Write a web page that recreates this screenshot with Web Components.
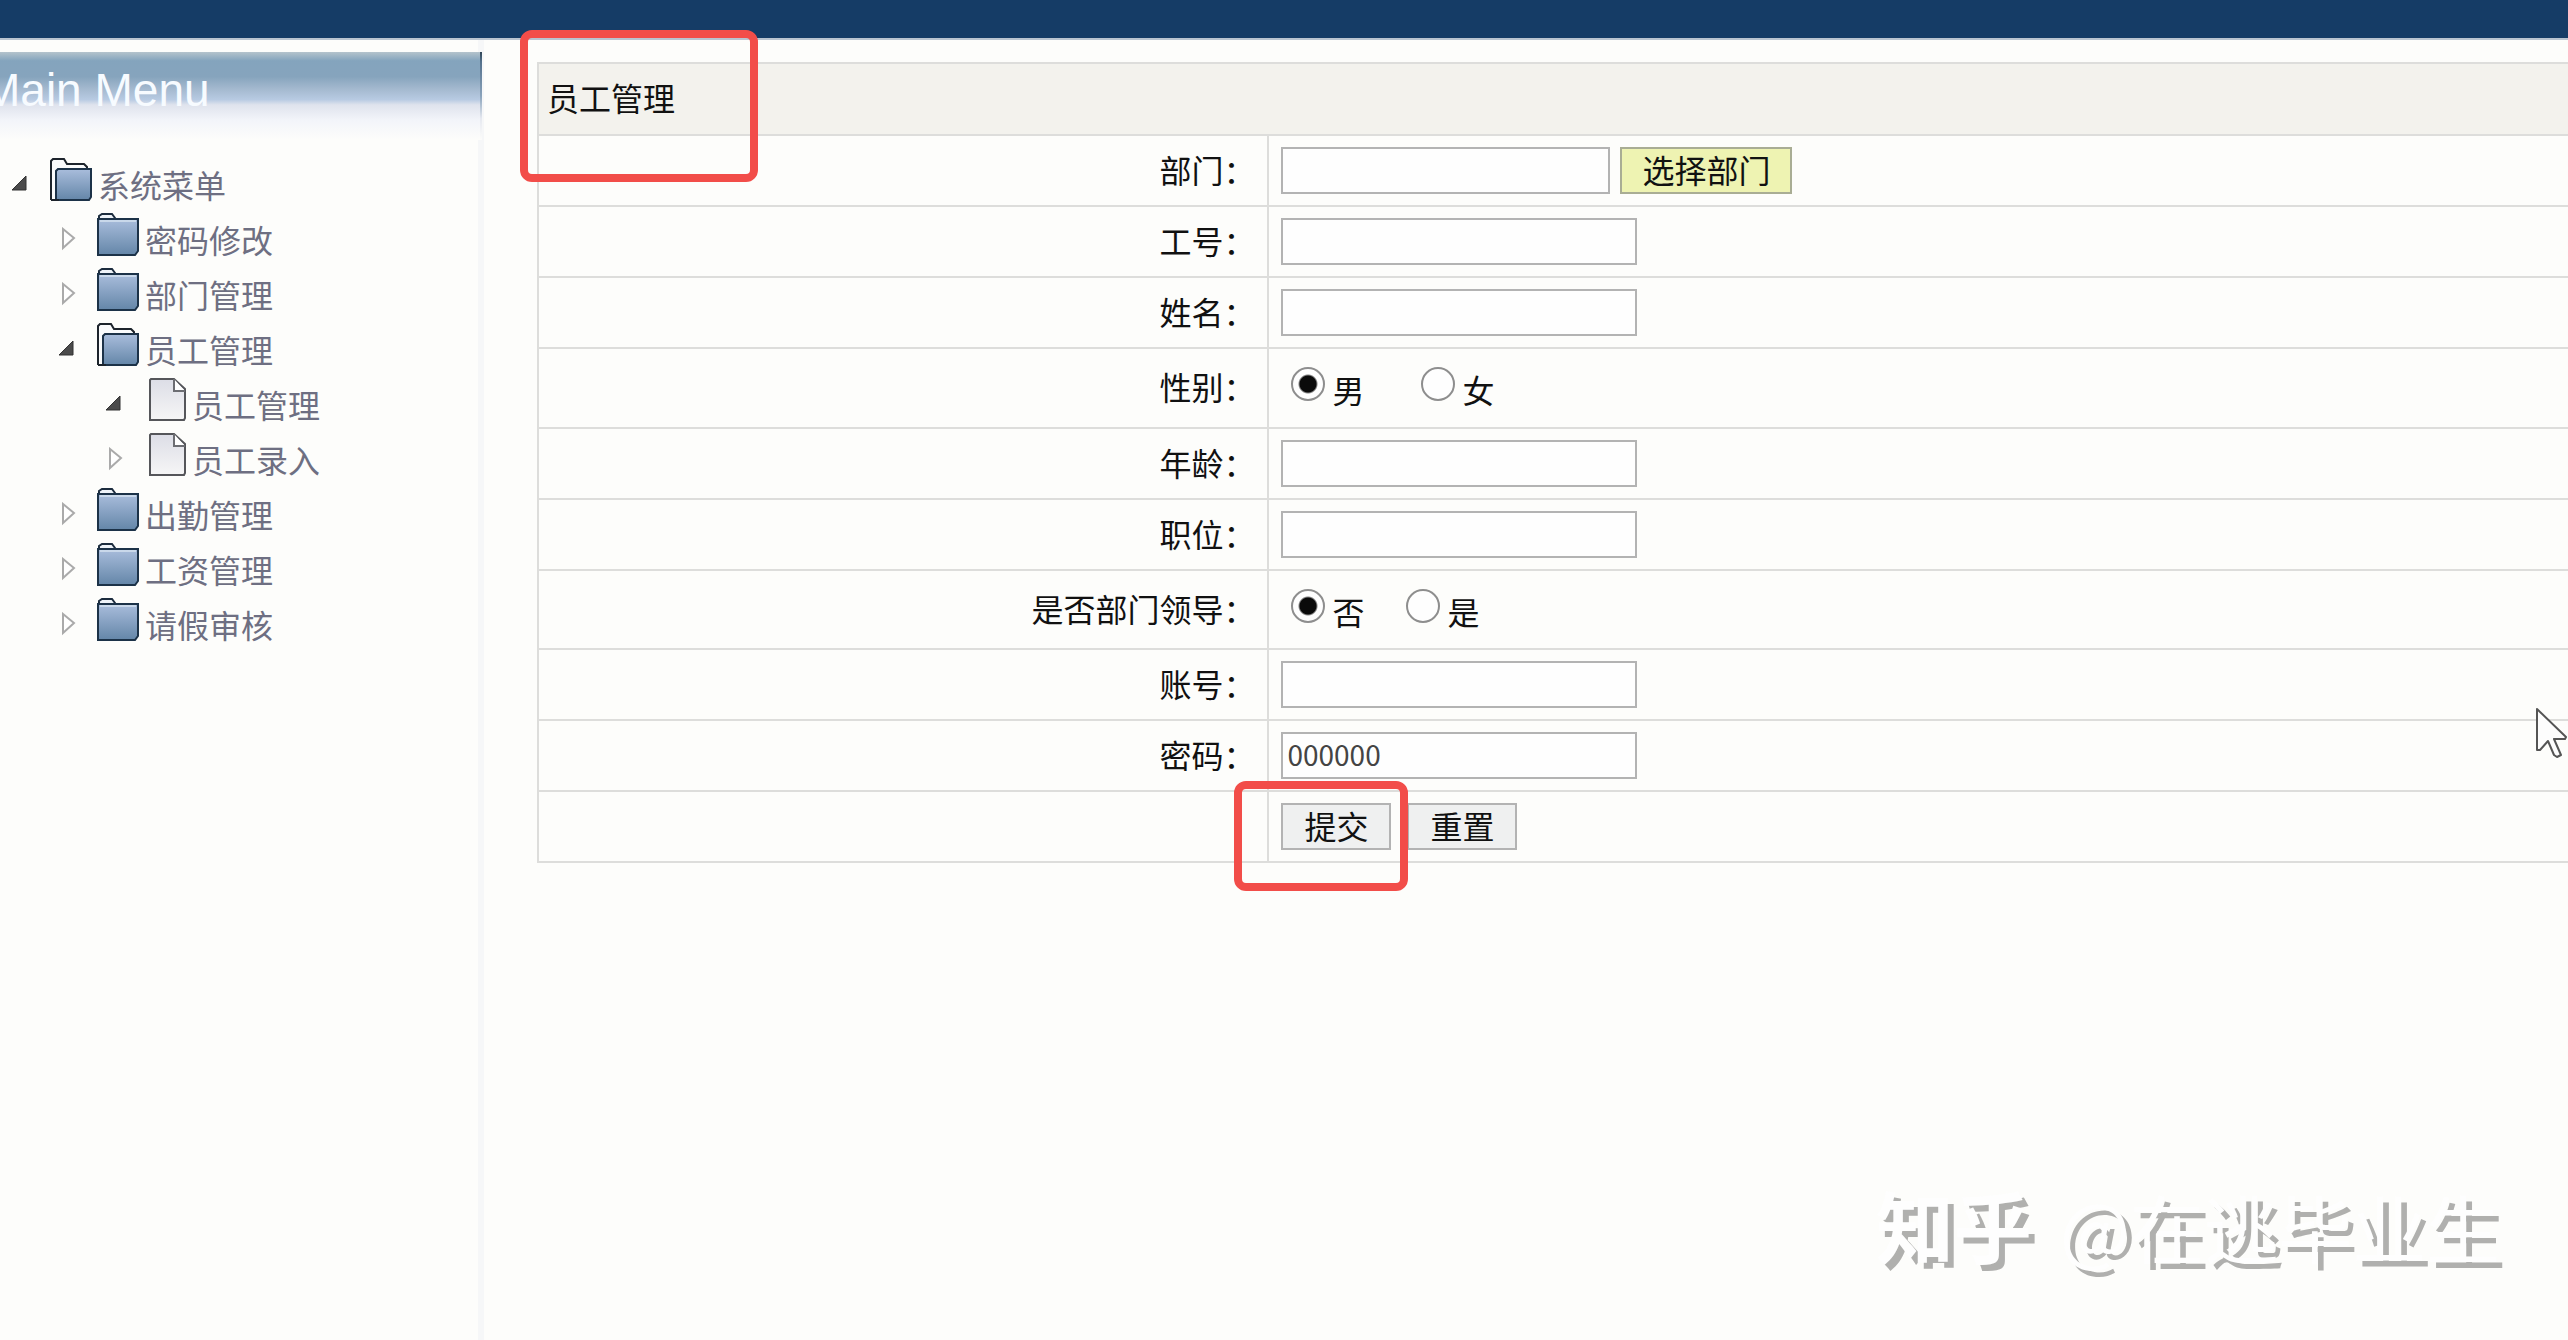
<!DOCTYPE html>
<html lang="zh-CN">
<head>
<meta charset="utf-8">
<title>员工管理</title>
<style>
    body {
        margin: 0;
        min-height: 100vh;
        background-color: #fdfdfb;
        color: #111;
        font-family: "Noto Sans CJK SC", sans-serif;
        font-size: 32px;
        line-height: 40px;
    }
</style>
</head>
<body>
<admin-page>
    <side-menu slot="menu" heading="Main Menu">
        <tree-node icon="open" expanded>系统菜单
            <tree-node slot="children" icon="closed">密码修改</tree-node>
            <tree-node slot="children" icon="closed">部门管理</tree-node>
            <tree-node slot="children" icon="open" expanded>员工管理
                <tree-node slot="children" icon="page" expanded>员工管理</tree-node>
                <tree-node slot="children" icon="page">员工录入</tree-node>
            </tree-node>
            <tree-node slot="children" icon="closed">出勤管理</tree-node>
            <tree-node slot="children" icon="closed">工资管理</tree-node>
            <tree-node slot="children" icon="closed">请假审核</tree-node>
        </tree-node>
    </side-menu>
    <employee-form></employee-form>
    <mouse-pointer slot="overlay"></mouse-pointer>
    <water-mark slot="overlay"><span slot="site">知乎</span>@在逃毕业生</water-mark>
</admin-page>

<script>
class AdminPage extends HTMLElement {

    constructor() {
        super();
        this.shadowDOM = this.attachShadow({mode: "open"});
    }

    connectedCallback() {
        this.shadowDOM.innerHTML = `
        <style>
            :host {
                display: flex;
                flex-direction: column;
                position: relative;
                min-height: 100vh;
                overflow: hidden;
            }

            header {
                height: 38px;
                background-color: #153c66;
                border-bottom: 2px solid #b9c4d0;
            }

            .columns {
                flex: 1;
                display: grid;
                grid-template-columns: 484px 1fr;
                column-gap: 53px;
            }
        </style>
        <header></header>
        <div class="columns">
            <slot name="menu"></slot>
            <main><slot></slot></main>
        </div>
        <slot name="overlay"></slot>
        `;
    }
}

class SideMenu extends HTMLElement {

    constructor() {
        super();
        this.shadowDOM = this.attachShadow({mode: "open"});
    }

    connectedCallback() {
        this.shadowDOM.innerHTML = `
        <style>
            :host {
                display: block;
                box-sizing: border-box;
                padding-top: 12px;
                border-right: 6px solid #f6f7f8;
                color: #6e6f82;
            }

            h1 {
                margin: 0 -4px 0 0;
                height: 88px;
                box-sizing: border-box;
                padding-top: 12px;
                text-indent: -18px;
                border-right: 2px solid;
                border-image: linear-gradient(#2d4150, #54718c 12%, #8aa3bb 50%, #e6e9f0 75%, #fdfdfb) 1;
                background: linear-gradient(#b4c3cc, #84a4bd 10%, #86a4bd 28%, #a4b9cf 42%, #b7cae2 54%, #dfe3ed 60%, #f3f5fa 78%, #fdfdfb);
                color: #f7fbff;
                font: 46px/52px "Liberation Sans", sans-serif;
                white-space: nowrap;
            }

            nav {
                padding: 16px 0 0 10px;
            }
        </style>
        <h1>${this.getAttribute("heading")}</h1>
        <nav><slot></slot></nav>
        `;
    }
}

const ICONS = {
    closed: `
        <svg width="42" height="44" viewBox="0 0 42 44">
            <defs><linearGradient id="g" x2="0" y2="1"><stop stop-color="#a9bddc"/><stop offset="1" stop-color="#6486a8"/></linearGradient></defs>
            <path d="M2 7V4l3-2h10l3 4v2" fill="#eef3f8" stroke="#1c2c3e" stroke-width="2"/>
            <path d="M1 7h40v32l-3 4H1z" fill="url(#g)" stroke="#1c3248" stroke-width="2"/>
            <path d="M3 9h36" stroke="#c9d8ea" stroke-width="2"/>
        </svg>`,
    open: `
        <svg width="42" height="44" viewBox="0 0 42 44">
            <defs><linearGradient id="g" x2="0" y2="1"><stop stop-color="#a9bddc"/><stop offset="1" stop-color="#6486a8"/></linearGradient></defs>
            <path d="M1 43V4l2-2h11l3 5h17l3 3v3" fill="#fafbfc" stroke="#1d242c" stroke-width="2"/>
            <path d="M6 43V14l2-2h33v28l-2 3z" fill="url(#g)" stroke="#1c3248" stroke-width="2"/>
            <path d="M1 43h8" stroke="#1d242c" stroke-width="2"/>
        </svg>`,
    page: `
        <svg width="42" height="44" viewBox="0 0 42 44">
            <defs><linearGradient id="g" x2="0" y2="1"><stop stop-color="#dcdde6"/><stop offset="1" stop-color="#f6f6f6"/></linearGradient></defs>
            <path d="M6 3l1-1h23l11 10v29l-1 2H6z" fill="url(#g)" stroke="#55565a" stroke-width="2"/>
            <path d="M30 2v12h11" fill="#fff" stroke="#6c6d72" stroke-width="2"/>
        </svg>`
};

class TreeNode extends HTMLElement {

    constructor() {
        super();
        this.shadowDOM = this.attachShadow({mode: "open"});
    }

    connectedCallback() {
        const arrow = this.hasAttribute("expanded")
            ? `<path d="M2 18L16 4v14z" fill="#4b4b4b" stroke="#333"/>`
            : `<path d="M6 2v19l11-10z" fill="#fff" stroke="#aaa" stroke-width="2"/>`;

        this.shadowDOM.innerHTML = `
        <style>
            :host {
                display: block;
            }

            .row {
                display: flex;
                align-items: center;
                height: 55px;
                white-space: nowrap;
            }

            .row > a {
                display: flex;
                align-items: center;
                column-gap: 6px;
                color: inherit;
                text-decoration: none;
            }

            .arrow {
                flex: none;
                margin-right: 20px;
            }

            .icon {
                height: 44px;
                line-height: 0;
                padding-bottom: 10px;
            }

            .children {
                padding-left: 47px;
            }
        </style>
        <div class="row">
            <svg class="arrow" width="20" height="24" viewBox="0 0 20 24">${arrow}</svg>
            <a href="#"><span class="icon">${ICONS[this.getAttribute("icon")]}</span><span><slot></slot></span></a>
        </div>
        <div class="children"><slot name="children"></slot></div>
        `;
    }
}

class RedMark extends HTMLElement {

    constructor() {
        super();
        this.shadowDOM = this.attachShadow({mode: "open"});
    }

    connectedCallback() {
        this.shadowDOM.innerHTML = `
        <style>
            :host {
                display: block;
                position: absolute;
                box-sizing: border-box;
                border: 8px solid #f24d49;
                border-radius: 12px;
                pointer-events: none;
            }
        </style>
        `;
    }
}

class EmployeeForm extends HTMLElement {

    constructor() {
        super();
        this.shadowDOM = this.attachShadow({mode: "open"});
    }

    connectedCallback() {
        this.render();
    }

    textRow(id, label, value = "") {
        return `
        <tr>
            <th><label for="${id}">${label}：</label></th>
            <td><input type="text" id="${id}" value="${value}"></td>
        </tr>`;
    }

    radioRow(name, label, options) {
        const items = options.map((text, i) => `
            <label><input type="radio" name="${name}" ${i === 0 ? "checked" : ""}><span>${text}</span></label>`);
        return `
        <tr class="${name}">
            <th>${label}：</th>
            <td><div class="radios">${items.join("")}</div></td>
        </tr>`;
    }

    render() {
        this.shadowDOM.innerHTML = `
        <style>
            :host {
                display: block;
                padding-top: 22px;
            }

            table {
                width: 100%;
                table-layout: fixed;
                border-collapse: separate;
                border-spacing: 0;
                border-top: 2px solid #dddddb;
                border-left: 2px solid #dddddb;
            }

            th, td {
                box-sizing: border-box;
                height: 71px;
                padding: 0 12px;
                border-bottom: 2px solid #dddddb;
                font-weight: normal;
                text-align: right;
            }

            th {
                padding-bottom: 4px;
                border-right: 2px solid #dddddb;
            }

            td {
                text-align: left;
            }

            .title {
                position: relative;
                height: 72px;
                padding-left: 8px;
                border-right: 0;
                background-color: #f3f2ed;
                text-align: left;
            }

            .title > red-mark {
                left: -19px;
                top: -34px;
                width: 238px;
                height: 152px;
            }

            .label-col {
                width: 36%;
            }

            .sex > * {
                height: 80px;
            }

            .leader > * {
                height: 79px;
            }

            .controls, .radios, .radios > label {
                display: flex;
            }

            .controls {
                column-gap: 10px;
            }

            .radios {
                padding: 0 0 4px 10px;
                column-gap: 57px;
            }

            .leader .radios {
                column-gap: 42px;
            }

            .radios > label {
                align-items: flex-end;
                column-gap: 7px;
                line-height: 32px;
            }

            .buttons {
                column-gap: 16px;
            }

            .submit {
                position: relative;
            }

            .submit > red-mark {
                left: -47px;
                top: -22px;
                width: 174px;
                height: 110px;
                z-index: 1;
            }

            input[type="text"] {
                display: block;
                box-sizing: border-box;
                width: 356px;
                height: 47px;
                margin: 0;
                padding: 0 4px 3px;
                border: 2px solid #b3b3b3;
                background-color: #fefefe;
                color: #444;
                font-family: inherit;
                font-size: 28px;
            }

            #dept {
                width: 329px;
            }

            input[type="radio"] {
                appearance: none;
                width: 34px;
                height: 34px;
                margin: 0 0 4px;
                border: 2px solid #8e8e8e;
                border-radius: 50%;
                background-color: #fefefe;
            }

            input[type="radio"]:checked {
                background-image: radial-gradient(circle, #0a0a0a 8px, transparent 10px);
            }

            button {
                display: block;
                box-sizing: border-box;
                width: 110px;
                height: 47px;
                padding: 0 0 3px;
                border: 2px solid #b3b3b3;
                background-color: #eff0f0;
                color: inherit;
                font-family: inherit;
                font-size: 32px;
                line-height: 40px;
            }

            .pick {
                width: 172px;
                border-color: #a9ad94;
                background-color: #eef3b2;
            }
        </style>
        <form>
            <table>
                <colgroup><col class="label-col"><col></colgroup>
                <tr><th class="title" colspan="2">员工管理<red-mark></red-mark></th></tr>
                <tr>
                    <th><label for="dept">部门：</label></th>
                    <td><div class="controls"><input type="text" id="dept"><button type="button" class="pick">选择部门</button></div></td>
                </tr>
                ${this.textRow("number", "工号")}
                ${this.textRow("name", "姓名")}
                ${this.radioRow("sex", "性别", ["男", "女"])}
                ${this.textRow("age", "年龄")}
                ${this.textRow("position", "职位")}
                ${this.radioRow("leader", "是否部门领导", ["否", "是"])}
                ${this.textRow("account", "账号")}
                ${this.textRow("password", "密码", "000000")}
                <tr>
                    <th></th>
                    <td>
                        <div class="controls buttons">
                            <div class="submit"><button type="submit">提交</button><red-mark></red-mark></div>
                            <button type="reset">重置</button>
                        </div>
                    </td>
                </tr>
            </table>
        </form>
        `;
    }
}

class MousePointer extends HTMLElement {

    constructor() {
        super();
        this.shadowDOM = this.attachShadow({mode: "open"});
    }

    connectedCallback() {
        this.shadowDOM.innerHTML = `
        <style>
            :host {
                display: block;
                position: absolute;
                right: 0;
                top: 706px;
                line-height: 0;
            }
        </style>
        <svg width="32" height="52" viewBox="0 0 32 52">
            <path d="M1 3v41h3l8-9 6 14 3 2 4-2-7-16h11l1-2z" fill="#fdfdfd" stroke="#555" stroke-width="2" stroke-linejoin="round"/>
        </svg>
        `;
    }
}

class WaterMark extends HTMLElement {

    constructor() {
        super();
        this.shadowDOM = this.attachShadow({mode: "open"});
    }

    connectedCallback() {
        this.shadowDOM.innerHTML = `
        <style>
            :host {
                display: flex;
                align-items: baseline;
                column-gap: 28px;
                position: absolute;
                right: 68px;
                bottom: 64px;
                color: #fefefe;
                font-size: 74px;
                line-height: 100px;
                text-shadow: 6px 6px 0 #b0b0ae;
                white-space: nowrap;
            }

            .site {
                font-size: 78px;
                font-weight: bold;
            }
        </style>
        <span class="site"><slot name="site"></slot></span>
        <span><slot></slot></span>
        `;
    }
}

customElements.define("admin-page", AdminPage);
customElements.define("side-menu", SideMenu);
customElements.define("tree-node", TreeNode);
customElements.define("red-mark", RedMark);
customElements.define("employee-form", EmployeeForm);
customElements.define("mouse-pointer", MousePointer);
customElements.define("water-mark", WaterMark);
</script>
</body>
</html>
